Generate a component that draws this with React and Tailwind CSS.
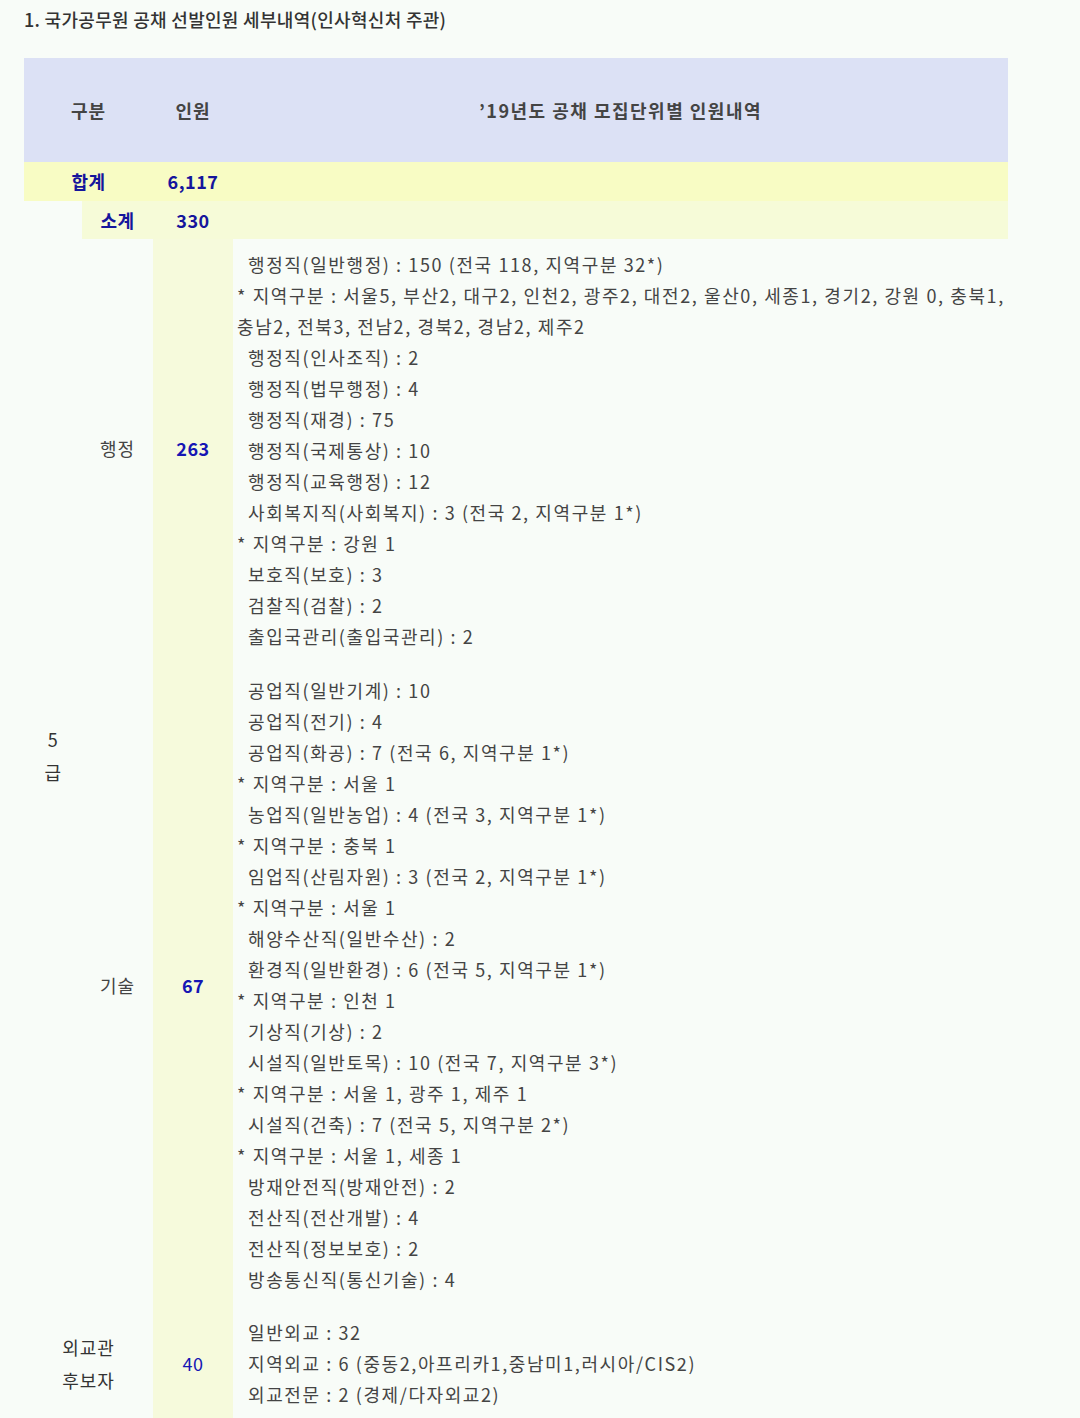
import React from "react";

const haengjeong = [
  { t: "행정직(일반행정) : 150 (전국 118, 지역구분 32*)", i: true },
  { t: "* 지역구분 : 서울5, 부산2, 대구2, 인천2, 광주2, 대전2, 울산0, 세종1, 경기2, 강원 0, 충북1,", i: false },
  { t: "충남2, 전북3, 전남2, 경북2, 경남2, 제주2", i: false },
  { t: "행정직(인사조직) : 2", i: true },
  { t: "행정직(법무행정) : 4", i: true },
  { t: "행정직(재경) : 75", i: true },
  { t: "행정직(국제통상) : 10", i: true },
  { t: "행정직(교육행정) : 12", i: true },
  { t: "사회복지직(사회복지) : 3 (전국 2, 지역구분 1*)", i: true },
  { t: "* 지역구분 : 강원 1", i: false },
  { t: "보호직(보호) : 3", i: true },
  { t: "검찰직(검찰) : 2", i: true },
  { t: "출입국관리(출입국관리) : 2", i: true },
];

const gisul = [
  { t: "공업직(일반기계) : 10", i: true },
  { t: "공업직(전기) : 4", i: true },
  { t: "공업직(화공) : 7 (전국 6, 지역구분 1*)", i: true },
  { t: "* 지역구분 : 서울 1", i: false },
  { t: "농업직(일반농업) : 4 (전국 3, 지역구분 1*)", i: true },
  { t: "* 지역구분 : 충북 1", i: false },
  { t: "임업직(산림자원) : 3 (전국 2, 지역구분 1*)", i: true },
  { t: "* 지역구분 : 서울 1", i: false },
  { t: "해양수산직(일반수산) : 2", i: true },
  { t: "환경직(일반환경) : 6 (전국 5, 지역구분 1*)", i: true },
  { t: "* 지역구분 : 인천 1", i: false },
  { t: "기상직(기상) : 2", i: true },
  { t: "시설직(일반토목) : 10 (전국 7, 지역구분 3*)", i: true },
  { t: "* 지역구분 : 서울 1, 광주 1, 제주 1", i: false },
  { t: "시설직(건축) : 7 (전국 5, 지역구분 2*)", i: true },
  { t: "* 지역구분 : 서울 1, 세종 1", i: false },
  { t: "방재안전직(방재안전) : 2", i: true },
  { t: "전산직(전산개발) : 4", i: true },
  { t: "전산직(정보보호) : 2", i: true },
  { t: "방송통신직(통신기술) : 4", i: true },
];

const oegyo = [
  { t: "일반외교 : 32", i: true },
  { t: "지역외교 : 6 (중동2,아프리카1,중남미1,러시아/CIS2)", i: true },
  { t: "외교전문 : 2 (경제/다자외교2)", i: true },
];

function Lines({ items }) {
  return (
    <div className="flex flex-col tracking-[1.6px]">
      {items.map((l, k) => (
        <div
          key={k}
          className={
            l.i
              ? "pl-[11px] leading-[31px] whitespace-nowrap"
              : "leading-[31px] whitespace-nowrap"
          }
        >
          {l.t}
        </div>
      ))}
    </div>
  );
}

export default function App() {
  return (
    <div
      className="w-[1080px] h-[1418px] overflow-hidden bg-[#f8fcf8] text-[#444444]"
      style={{ fontFamily: '"Noto Sans CJK KR", "Noto Sans", sans-serif' }}
    >
      <div className="pl-[24px] pt-[7px] h-[58px] text-[18px] leading-[24px] tracking-[0.3px] font-medium text-[#333333]">
        1. 국가공무원 공채 선발인원 세부내역(인사혁신처 주관)
      </div>
      <table className="ml-[24px] w-[984px] table-fixed border-collapse">
        <colgroup>
          <col className="w-[58px]" />
          <col className="w-[71px]" />
          <col className="w-[80px]" />
          <col className="w-[775px]" />
        </colgroup>
        <thead>
          <tr className="h-[104px] bg-[#dce1f5] text-[18px] font-bold text-[#444444]">
            <th colSpan={2} className="p-0 text-center font-bold tracking-[1px]">
              구분
            </th>
            <th className="p-0 text-center font-bold tracking-[1px]">인원</th>
            <th className="p-0 text-center font-bold tracking-[1.5px]">
              ’19년도 공채 모집단위별 인원내역
            </th>
          </tr>
        </thead>
        <tbody className="text-[18px]">
          <tr className="h-[39px] bg-[#f8fcc4] text-[#15159c] font-bold tracking-[0.5px]">
            <td colSpan={2} className="p-0 text-center">
              합계
            </td>
            <td className="p-0 text-center">6,117</td>
            <td className="p-0"></td>
          </tr>
          <tr className="h-[38px] tracking-[0.5px]">
            <td rowSpan={3} className="p-0 pt-[4px] text-center align-middle text-[#333333] leading-[33px]">
              5
              <br />
              급
            </td>
            <td className="p-0 text-center bg-[#f6fbd8] text-[#15159c] font-bold">
              소계
            </td>
            <td className="p-0 text-center bg-[#f6fbd8] text-[#15159c] font-bold">
              330
            </td>
            <td className="p-0 bg-[#f6fbd8]"></td>
          </tr>
          <tr>
            <td className="p-0 pb-[6px] text-center align-middle text-[#444444] tracking-[1px]">행정</td>
            <td className="p-0 pb-[6px] text-center align-middle bg-[#f6fadc] text-[#1616b4] font-bold tracking-[0.5px]">
              263
            </td>
            <td className="pt-[10px] pb-[12px] pl-[4px] pr-0 align-top text-[#444444]">
              <Lines items={haengjeong} />
            </td>
          </tr>
          <tr>
            <td className="p-0 text-center align-middle text-[#444444] tracking-[1px]">기술</td>
            <td className="p-0 text-center align-middle bg-[#f6fadc] text-[#1616b4] font-bold tracking-[0.5px]">
              67
            </td>
            <td className="py-[11px] pl-[4px] pr-0 align-top text-[#444444]">
              <Lines items={gisul} />
            </td>
          </tr>
          <tr>
            <td colSpan={2} className="p-0 text-center align-middle text-[#333333] leading-[33px] tracking-[1px]">
              외교관
              <br />
              후보자
            </td>
            <td className="p-0 text-center align-middle bg-[#f6fadc] text-[#1616b4] tracking-[0.5px]">
              40
            </td>
            <td className="py-[11px] pl-[4px] pr-0 align-top text-[#444444]">
              <Lines items={oegyo} />
            </td>
          </tr>
        </tbody>
      </table>
    </div>
  );
}
